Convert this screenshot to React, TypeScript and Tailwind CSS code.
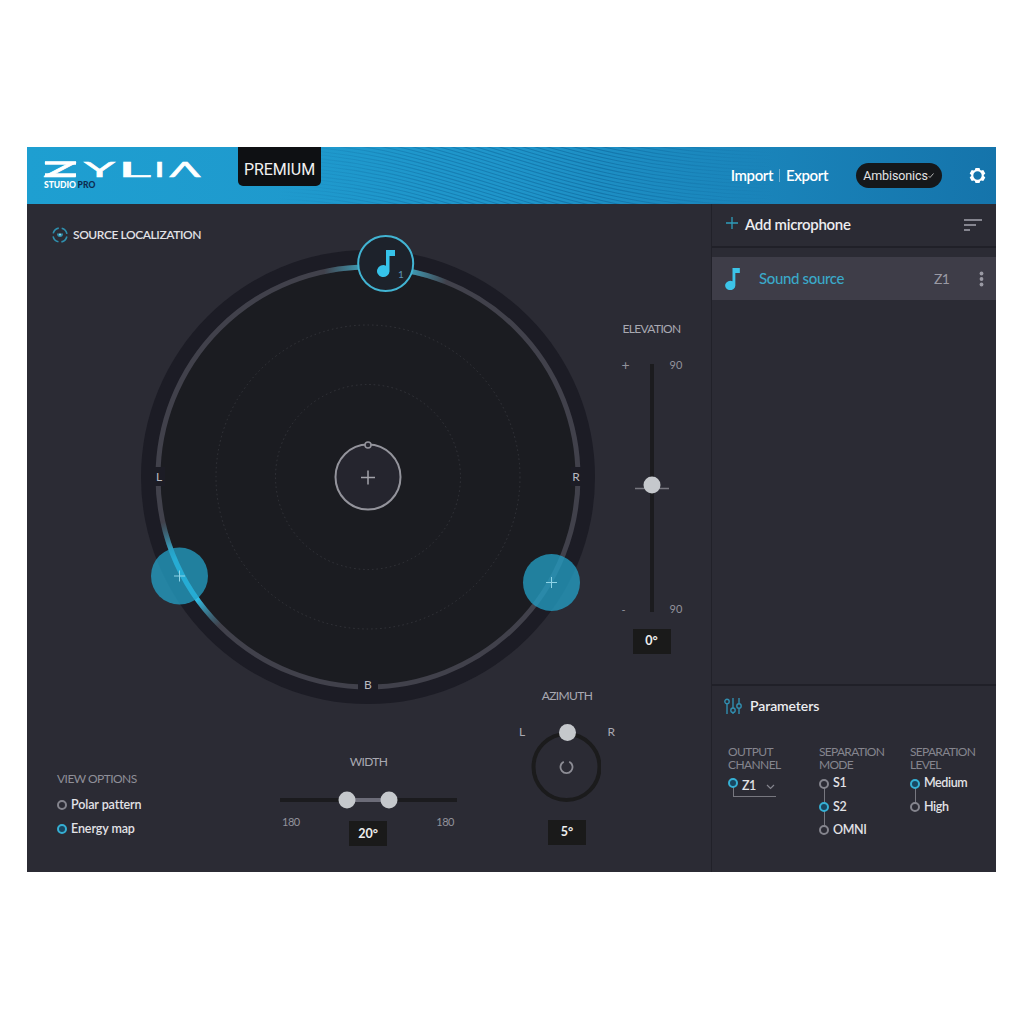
import React, { useState } from "react";
import clsx from "clsx";

const waves = Array.from({ length: 44 }, (_, i) => -96 + i * 3.6);

const logoLetters = [
  { char: "Z", x: 16, width: 34 },
  { char: "Y", x: 57, width: 31 },
  { char: "L", x: 91, width: 33 },
  { char: "I", x: 127, width: 11 },
  { char: "Λ", x: 142.5, width: 31 },
];

function Logo() {
  return (
    <svg width="190" height="44" viewBox="0 0 190 44" className="shrink-0" aria-label="ZYLIA Studio Pro">
      <g fill="#fff" stroke="#fff" strokeWidth="0.5" fontFamily="Lato, sans-serif" fontSize="21.500" fontWeight="400">
        {logoLetters.map((l) => (
          <text key={l.char} x={l.x} y="29.500" textLength={l.width} lengthAdjust="spacingAndGlyphs">
            {l.char}
          </text>
        ))}
      </g>
      <path d="M18 16h31M18 28h31" stroke="#fff" strokeWidth="3.500" />
      <text x="17" y="41" fontFamily="Lato, sans-serif" fontSize="8.500" fontWeight="900" fill="#fff" textLength="32">
        STUDIO
      </text>
      <text x="50.500" y="41" fontFamily="Lato, sans-serif" fontSize="8.500" fontWeight="900" fill="#0d2c50" textLength="18">
        PRO
      </text>
    </svg>
  );
}

function Note({ className }: { className?: string }) {
  return (
    <svg viewBox="0 0 18 27" className={className} fill="#3cc4e8">
      <path d="M9 0h9v6h-5.500v15.500a6.250 5.750 0 1 1-3.500-5.200z" />
    </svg>
  );
}

function Header() {
  return (
    <header className="relative flex h-[57px] shrink-0 items-start bg-linear-to-r from-[#1e9fd1] via-[#1f95ca] to-[#1574ab] text-white">
      <svg className="absolute inset-0" width="969" height="57" fill="none">
        <defs>
          <linearGradient id="fade" gradientUnits="userSpaceOnUse" x1="250" y1="0" x2="750" y2="0">
            <stop offset="0" stopColor="#0c669b" stopOpacity="0" />
            <stop offset=".3" stopColor="#0c669b" stopOpacity=".45" />
            <stop offset=".65" stopColor="#0c669b" stopOpacity=".6" />
            <stop offset="1" stopColor="#0c669b" stopOpacity="0" />
          </linearGradient>
        </defs>
        {waves.map((y) => (
          <path key={y} d={`M230 ${y}C430 ${y} 510 ${y + 92} 750 ${y + 94}`} stroke="url(#fade)" strokeWidth="1.100" />
        ))}
      </svg>
      <div className="relative flex h-full w-full items-start">
        <Logo />
        <div className="ml-[21px] flex h-[39px] w-[83px] items-center justify-center rounded-b-[5px] bg-[#0e1013] pt-[6px] font-[Roboto,sans-serif] text-[16px] tracking-[-0.100px] text-[#f1f1f1]">
          PREMIUM
        </div>
        <div className="ml-auto flex h-[57px] items-center pr-[10px]">
          <div className="flex items-center pb-px text-[15px] font-semibold tracking-[-0.400px]">
            <button>Import</button>
            <span className="mx-[6px] h-[13px] w-px bg-white/35" />
            <button>Export</button>
          </div>
          <button className="ml-[28px] flex h-[25px] w-[86px] items-center justify-center rounded-full bg-[#15181b] pt-px pr-px font-[Roboto,sans-serif] text-[12.500px] tracking-[-0.100px] text-[#e3e3e3]">
            Ambisonics
            <svg width="6" height="6" viewBox="0 0 6 6" fill="none" stroke="#b5b5b5" strokeWidth="1">
              <path d="M.5 3l1.500 1.500 3.500-4" />
            </svg>
          </button>
          <svg className="ml-[27px]" width="17" height="17" viewBox="0 0 17 17">
            <path
              fillRule="evenodd"
              fill="#fff"
              d="M6.500 1h4l.7 2 1 .6 2.100-.5 2 3.400-1.500 1.500v1l1.500 1.500-2 3.400-2.100-.5-1 .6-.7 2h-4l-.7-2-1-.6-2.100.5-2-3.400L2.200 9V8L.7 6.500l2-3.400 2.100.5 1-.6zM8.500 4.300a4.200 4.200 0 1 0 0 8.400a4.200 4.200 0 1 0 0-8.400z"
            />
          </svg>
        </div>
      </div>
    </header>
  );
}

function Dial() {
  return (
    <svg width="454" height="454" viewBox="0 0 454 454" className="shrink-0 overflow-visible" fill="none">
      <defs>
        <radialGradient id="topGlow" gradientUnits="userSpaceOnUse" cx="245" cy="18" r="62">
          <stop offset=".4" stopColor="#3f9bb4" />
          <stop offset="1" stopColor="#3f9bb4" stopOpacity="0" />
        </radialGradient>
        <radialGradient id="leftGlow" gradientUnits="userSpaceOnUse" cx="41" cy="329" r="60">
          <stop offset=".35" stopColor="#2fd2ff" />
          <stop offset="1" stopColor="#2fa0be" stopOpacity="0" />
        </radialGradient>
      </defs>
      <circle cx="227" cy="227" r="227" fill="#1c1c25" />
      <circle cx="227" cy="227" r="210" fill="#1b1c21" stroke="#41414b" strokeWidth="5" />
      <circle cx="227" cy="227" r="210" stroke="url(#topGlow)" strokeWidth="5" />
      <circle cx="227" cy="227" r="210" stroke="url(#leftGlow)" strokeWidth="5" />
      <g stroke="#34353b" strokeDasharray="1.500 3">
        <circle cx="227" cy="227" r="152" />
        <circle cx="227" cy="227" r="92.500" />
      </g>
      <g fill="#1c1c25">
        <path d="M12 217h12v19H12zM430 217h12v19h-12zM217 430h20v14h-20z" />
      </g>
      <g fill="#b9b9c0" fontFamily="Lato, sans-serif" fontSize="12" textAnchor="middle">
        <text x="18" y="231">L</text>
        <text x="435" y="231">R</text>
        <text x="227" y="439">B</text>
      </g>

      <circle cx="227" cy="227" r="32.500" fill="#25252e" stroke="#94949c" strokeWidth="2" />
      <circle cx="227" cy="195" r="3" fill="#25252e" stroke="#94949c" strokeWidth="1.500" />
      <path d="M220 227.500h14M227 220.500v14" stroke="#a3a3aa" strokeWidth="1.500" />

      <circle cx="38.500" cy="326" r="28.500" fill="#23a0c6" fillOpacity=".76" />
      <path d="M33 326h11M38.500 320.500v11" stroke="#8ed3e6" />
      <circle cx="410.500" cy="332.500" r="28.500" fill="#23a0c6" fillOpacity=".76" />
      <path d="M405 332.500h11M410.500 327v11" stroke="#8ed3e6" />

      <circle cx="244.700" cy="13.500" r="27.500" fill="#1d222b" stroke="#42b4d3" strokeWidth="2" />
      <path d="M245 0h9v6h-5.500v15.500a6.250 6 0 1 1-3.500-5.800z" fill="#36c3ea" />
      <text x="257" y="28" fontFamily="Lato, sans-serif" fontSize="10" fill="#5b93b5">1</text>
    </svg>
  );
}

function Value({ children, className }: { children: React.ReactNode; className?: string }) {
  return (
    <div className={clsx("flex h-[25px] w-[38px] items-center justify-center bg-[#1a1a1a] text-[12.500px] font-bold text-[#eeeeee]", className)}>
      {children}
    </div>
  );
}

function Elevation() {
  return (
    <div className="flex flex-1 flex-col items-center pt-[71px] pr-[3px] text-[#a9a9b2]">
      <h3 className="text-[12px] leading-[16px] tracking-[-0.650px]">ELEVATION</h3>
      <div className="mt-[27px] flex h-[248px] w-[64px] justify-between text-[11px] leading-[11px] text-[#92929b]">
        <div className="flex w-[15px] flex-col justify-between pl-[2px]">
          <span className="-mt-[5px] text-[14px]">+</span>
          <span className="-mb-[3px]">-</span>
        </div>
        <svg width="34" height="248" className="overflow-visible" fill="none">
          <path d="M17 0v248" stroke="#1b1b1e" strokeWidth="4" />
          <path d="M0 124.500h34" stroke="#77777f" strokeWidth="1.500" />
          <circle cx="17" cy="121" r="8.500" fill="#c5c8cc" />
        </svg>
        <div className="flex w-[15px] flex-col justify-between pl-px">
          <span className="-mt-[5px]">90</span>
          <span className="-mb-[2px]">90</span>
        </div>
      </div>
      <Value className="mt-[17px]">0°</Value>
    </div>
  );
}

function Width() {
  return (
    <div className="flex w-[177px] flex-col items-center text-[#a9a9b2]">
      <h3 className="mt-[66px] text-[12px] leading-[16px] tracking-[-0.650px]">WIDTH</h3>
      <svg width="177" height="18" className="mt-[21px]" fill="none">
        <path d="M0 9h177" stroke="#1b1b1e" strokeWidth="4" />
        <path d="M67 9h42" stroke="#6c6c78" strokeWidth="4" />
        <circle cx="67" cy="9" r="8.500" fill="#c5c8cc" />
        <circle cx="109" cy="9" r="8.500" fill="#c5c8cc" />
      </svg>
      <div className="flex w-full items-start justify-between pr-[3px] pl-[2px] text-[11px] leading-[14px] tracking-[-0.500px] text-[#92929b]">
        <span className="mt-[6px]">180</span>
        <Value className="mt-[12px] tracking-normal">20°</Value>
        <span className="mt-[6px]">180</span>
      </div>
    </div>
  );
}

function Azimuth() {
  return (
    <div className="flex w-[96px] flex-col items-center text-[#a9a9b2]">
      <h3 className="text-[12px] leading-[16px] tracking-[-0.650px]">AZIMUTH</h3>
      <div className="mt-[20px] flex w-full justify-between text-[12px] leading-[16px]">
        <span>L</span>
        <svg width="70" height="80" viewBox="0 0 70 80" fill="none">
          <circle cx="35.500" cy="43" r="33" stroke="#1b1b1c" strokeWidth="4" />
          <circle cx="36.500" cy="8.500" r="8.500" fill="#c5c8cc" />
          <path d="M32.800 37.700a6 6 0 1 0 5.400 0" stroke="#8d8d95" strokeWidth="1.800" />
        </svg>
        <span>R</span>
      </div>
      <Value className="mt-[16px]">5°</Value>
    </div>
  );
}

function Radio({ on }: { on: boolean }) {
  return (
    <span className={clsx("relative size-[10px] shrink-0 rounded-full border-2", on ? "border-[#35afd3] bg-[#194660]" : "border-[#84848d] bg-[#2b2b34]")} />
  );
}

function ViewOptions() {
  const [selected, setSelected] = useState("Energy map");
  return (
    <div className="w-[120px] pt-[83px]">
      <h3 className="mb-[6px] text-[12px] leading-[16px] tracking-[-0.550px] text-[#8f8f98]">VIEW OPTIONS</h3>
      {["Polar pattern", "Energy map"].map((option) => (
        <button
          key={option}
          onClick={() => setSelected(option)}
          className="flex h-[24px] items-center gap-[4px] text-[12.500px] font-semibold tracking-[-0.100px] text-[#e2e2e6]"
        >
          <Radio on={selected === option} />
          {option}
        </button>
      ))}
    </div>
  );
}

function Group({ title, options, initial }: { title: React.ReactNode; options: string[]; initial: string }) {
  const [selected, setSelected] = useState(initial);
  return (
    <div className="w-[91px] shrink-0">
      <h4 className="text-[12px] leading-[13px] tracking-[-0.700px] text-[#85858e]">{title}</h4>
      <div className="relative mt-px">
        <span className="absolute top-[11px] bottom-[12px] left-[4.500px] w-px bg-[#77777f]" />
        {options.map((option) => (
          <button
            key={option}
            onClick={() => setSelected(option)}
            className="flex h-[23.400px] items-center gap-[4px] text-[12.500px] font-semibold tracking-[-0.400px] text-[#e2e2e6]"
          >
            <Radio on={selected === option} />
            {option}
          </button>
        ))}
      </div>
    </div>
  );
}

function Parameters() {
  return (
    <section className="h-[188px] border-t-2 border-[#202028] pt-[11px]">
      <h2 className="flex items-center gap-[8px] pl-[12px] text-[14px] leading-[18px] font-semibold tracking-[-0.100px] text-[#ededf0]">
        <svg width="18" height="17" viewBox="0 0 18 17" fill="none" stroke="#318eaf" strokeWidth="1.400">
          <path d="M3 6v10M9 0v10M9 14v2M15 0v5.500M15 10.500V16" />
          <circle cx="3" cy="3.500" r="2.200" />
          <circle cx="9" cy="12.200" r="2.200" />
          <circle cx="15" cy="8" r="2.200" />
        </svg>
        Parameters
      </h2>
      <div className="mt-[30px] flex pl-[16px]">
        <div className="w-[91px] shrink-0">
          <h4 className="text-[12px] leading-[13px] tracking-[-0.600px] text-[#85858e]">
            OUTPUT
            <br />
            CHANNEL
          </h4>
          <div className="flex pt-[7px]">
            <Radio on />
            <button className="-ml-[5px] flex h-[19px] w-[43px] items-center justify-between border-b border-l border-[#77777f] pr-px pb-px pl-[8px] text-[12.500px] font-semibold tracking-[-0.500px] text-[#e2e2e6]">
              Z1
              <svg width="9" height="6" viewBox="0 0 9 6" fill="none" stroke="#85858e" strokeWidth="1.200">
                <path d="M1 1l3.500 3.500L8 1" />
              </svg>
            </button>
          </div>
        </div>
        <Group title={<>SEPARATION<br />MODE</>} options={["S1", "S2", "OMNI"]} initial="S2" />
        <Group title={<>SEPARATION<br />LEVEL</>} options={["Medium", "High"]} initial="Medium" />
      </div>
    </section>
  );
}

function Sidebar() {
  return (
    <aside className="flex w-[285px] shrink-0 flex-col overflow-hidden border-l border-[#212129]">
      <div className="flex h-[44px] items-center justify-between border-b-2 border-[#202028] pr-[14px] pl-[14px]">
        <button className="flex items-center gap-[7px] pb-px text-[15px] font-semibold tracking-[-0.300px] text-[#ededf0]">
          <svg width="12" height="12" viewBox="0 0 12 12" stroke="#2f9dbb" strokeWidth="1.300" className="-mt-[3px]">
            <path d="M6 0v12M0 6h12" />
          </svg>
          Add microphone
        </button>
        <svg width="18" height="12" viewBox="0 0 18 12" stroke="#85858f" strokeWidth="1.800">
          <path d="M0 1h18M0 6h12M0 11h6" />
        </svg>
      </div>
      <div className="mt-[9px] flex h-[43px] items-center bg-[#3e3d48] pr-[12px] pl-[13px]">
        <Note className="h-[22px] w-[15px]" />
        <span className="ml-[19px] pb-px text-[15px] font-medium tracking-[-0.350px] text-[#3aa9c9]">Sound source</span>
        <span className="ml-auto pb-px text-[14px] tracking-[-0.800px] text-[#9a9aa4]">Z1</span>
        <svg width="5" height="16" viewBox="0 0 5 16" fill="#9a9aa4" className="ml-[30px]">
          <circle cx="2.500" cy="2.500" r="1.900" />
          <circle cx="2.500" cy="8" r="1.900" />
          <circle cx="2.500" cy="13.500" r="1.900" />
        </svg>
      </div>
      <div className="flex-1" />
      <Parameters />
    </aside>
  );
}

function App() {
  return (
    <div className="h-[1024px] w-[1024px] bg-white pt-[147px] pl-[27px] font-[Lato,sans-serif]">
      <div className="flex h-[725px] w-[969px] flex-col bg-[#2b2b34]">
        <Header />
        <div className="flex flex-1">
          <main className="flex w-[684px] flex-col">
            <h2 className="mt-[20px] flex h-[21px] items-center gap-[5px] pl-[25px] text-[12px] font-semibold tracking-[-0.420px] text-[#e2e2e6]">
              <svg width="16" height="16" viewBox="0 0 16 16" fill="none" stroke="#2f8fad" strokeWidth="1.600">
                <circle cx="8" cy="8" r="7" strokeDasharray="8 3" strokeDashoffset="-1.500" />
                <path d="M5 6.500a3 3.500 0 0 0 6 0z" fill="#2f8fad" stroke="none" />
                <circle cx="8" cy="7.500" r="1" fill="#9fd8e8" stroke="none" />
              </svg>
              SOURCE LOCALIZATION
            </h2>
            <div className="mt-[5px] flex pl-[114px]">
              <Dial />
              <Elevation />
            </div>
            <div className="-mt-[16px] flex pl-[30px]">
              <ViewOptions />
              <div className="ml-[103px]">
                <Width />
              </div>
              <div className="ml-[62px]">
                <Azimuth />
              </div>
            </div>
          </main>
          <Sidebar />
        </div>
      </div>
    </div>
  );
}

export default App;
